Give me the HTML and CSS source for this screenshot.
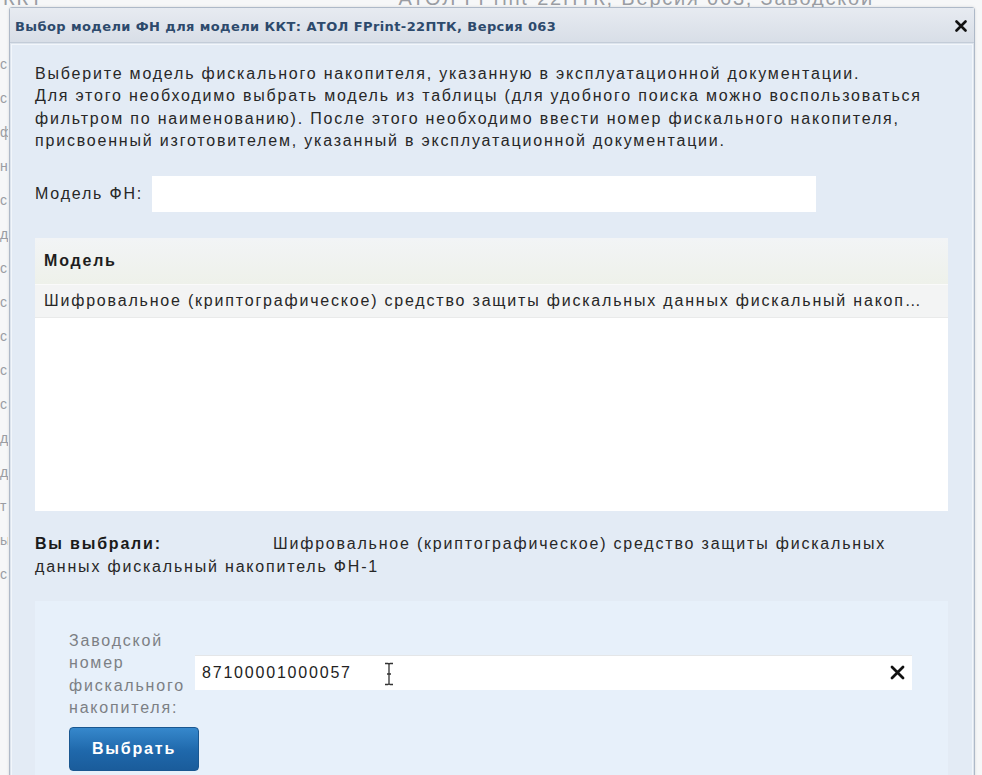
FILE: index.html
```html
<!DOCTYPE html>
<html lang="ru">
<head>
<meta charset="utf-8">
<title>Выбор модели ФН</title>
<link rel="stylesheet" href="styles.css">
</head>
<body>
<div class="page">
  <div class="page-top">
    <span class="page-kkt">ККТ</span>
    <span class="page-head">АТОЛ FPrint-22ПТК, Версия 063, Заводской</span>
  </div>
  <div class="page-side">
    <div>с</div><div>с</div><div>ф</div><div>н</div><div>с</div><div>д</div><div>с</div><div>с</div><div>с</div><div>с</div><div>с</div><div>д</div><div>д</div><div>т</div><div>ы</div><div>с</div>
  </div>
</div>

<div class="dialog">
  <div class="dialog-title">
    <span class="dialog-title-text">Выбор модели ФН для модели ККТ: АТОЛ FPrint-22ПТК, Версия 063</span>
    <svg class="dialog-close" width="12" height="12" viewBox="0 0 12 12"><path d="M1.5 1.5 L10.5 10.5 M10.5 1.5 L1.5 10.5" stroke="#111" stroke-width="2.6" stroke-linecap="round"/></svg>
  </div>
  <div class="dialog-body">
    <p class="intro">Выберите модель фискального накопителя, указанную в эксплуатационной документации.<br>Для этого необходимо выбрать модель из таблицы (для удобного поиска можно воспользоваться<br>фильтром по наименованию). После этого необходимо ввести номер фискального накопителя,<br>присвоенный изготовителем, указанный в эксплуатационной документации.</p>

    <div class="filter-row">
      <label class="filter-label">Модель ФН:</label>
      <div class="filter-input"></div>
    </div>

    <div class="grid">
      <div class="grid-head">Модель</div>
      <div class="grid-row">Шифровальное (криптографическое) средство защиты фискальных данных фискальный накопитель ФН-1</div>
    </div>

    <div class="chosen">
      <div class="chosen-first"><b class="chosen-label">Вы выбрали:</b><span class="chosen-value">Шифровальное (криптографическое) средство защиты фискальных</span></div>
      <div class="chosen-rest">данных фискальный накопитель ФН-1</div>
    </div>

    <div class="serial-panel">
      <div class="serial-row">
        <label class="serial-label">Заводской номер фискального накопителя:</label>
        <div class="serial-input">
          <span class="serial-value">87100001000057</span>
          <svg class="ibeam" width="10" height="24" viewBox="0 0 10 24"><path d="M1 1.5 H4 Q5 1.5 5 3 V21 Q5 22.5 4 22.5 H1 M9 1.5 H6 Q5 1.5 5 3 M5 21 Q5 22.5 6 22.5 H9 M3 12 H7" stroke="#333" stroke-width="1.3" fill="none"/></svg>
          <svg class="serial-clear" width="15" height="15" viewBox="0 0 15 15"><path d="M2 2 L13 13 M13 2 L2 13" stroke="#111" stroke-width="2.8" stroke-linecap="round"/></svg>
        </div>
      </div>
      <button class="btn-primary">Выбрать</button>
    </div>
  </div>
</div>
</body>
</html>
```

FILE: styles.css
```css
html, body {
  margin: 0;
  padding: 0;
  height: 100%;
  overflow: hidden;
}
body {
  background: #f6f7f8;
  font-family: "Liberation Sans", Arial, sans-serif;
  color: #2b2b2b;
  position: relative;
}

/* page behind the modal */
.page {
  color: #9a9da3;
  font-size: 20px;
  letter-spacing: 1.8px;
}
.page-top {
  display: flex;
  justify-content: space-between;
  margin-top: -13px;
  height: 20px;
  padding-right: 108px;
}
.page-kkt {
  padding-left: 3px;
}
.page-side {
  width: 8px;
  overflow: hidden;
  font-size: 14px;
  line-height: 34px;
  margin-top: 40px;
}

/* modal */
.dialog {
  position: absolute;
  left: 9px;
  top: 7px;
  width: 964px;
  bottom: -40px;
  border: 1px solid #aeb9c8;
  border-radius: 3px 3px 0 0;
  background: #dde4ed;
  display: flex;
  flex-direction: column;
  box-shadow: 0 0 3px rgba(0,0,0,0.12);
}
.dialog-title {
  height: 34px;
  flex: 0 0 auto;
  display: flex;
  align-items: center;
  justify-content: space-between;
  padding: 0 7px 0 5px;
  background: linear-gradient(#e7ebf1, #d8dee7);
  border-bottom: 1px solid #c3ccd8;
}
.dialog-title-text {
  font-family: "DejaVu Sans", Verdana, sans-serif;
  font-weight: bold;
  font-size: 13px;
  letter-spacing: 0.4px;
  color: #2d4a6c;
  padding-top: 2px;
}
.dialog-close {
  display: block;
  margin-top: 2px;
}

.dialog-body {
  flex: 1 1 auto;
  margin: 1px 1px 0 1px;
  border: 1px solid #f2f6fb;
  background: #e3ebf5;
  padding: 18px 22px 0 23px;
  letter-spacing: 1.8px;
  color: #272727;
}

.intro {
  margin: 0;
  font-size: 16px;
  line-height: 22.4px;
}

.filter-row {
  display: flex;
  align-items: center;
  margin-top: 23px;
}
.filter-label {
  font-size: 16px;
  width: 117px;
}
.filter-input {
  width: 664px;
  height: 36px;
  background: #fff;
}

.grid {
  margin-top: 26px;
  width: 913px;
  height: 273px;
  background: #fff;
}
.grid-head {
  height: 46px;
  padding-left: 9px;
  font-size: 16px;
  font-weight: bold;
  line-height: 46px;
  color: #1e1e1e;
  background: linear-gradient(#f2f4f6, #eef1ea);
}
.grid-row {
  height: 32px;
  line-height: 32px;
  padding: 0 22px 0 9px;
  font-size: 16px;
  background: #f3f4f4;
  border-top: 1px solid #fafafa;
  border-bottom: 1px solid #e9eaea;
  white-space: nowrap;
  overflow: hidden;
  text-overflow: ellipsis;
}

.chosen {
  margin-top: 21px;
  font-size: 16px;
  line-height: 23.5px;
  white-space: nowrap;
}
.chosen-label {
  display: inline-block;
  width: 238px;
  color: #1a1a1a;
}

.serial-panel {
  margin-top: 22px;
  width: 913px;
  background: #e7f0fa;
  padding: 29px 0 10px 34px;
  box-sizing: border-box;
  height: 200px;
}
.serial-row {
  display: flex;
  align-items: center;
  gap: 4px;
}
.serial-label {
  width: 122px;
  font-size: 16px;
  line-height: 22.5px;
  color: #7c7f84;
}
.serial-input {
  width: 717px;
  height: 35px;
  margin-bottom: 5px;
  background: #fff;
  border-top: 1px solid #e4e6e8;
  box-sizing: border-box;
  display: flex;
  align-items: center;
  padding: 0 7px;
}
.serial-value {
  font-size: 16px;
  color: #222;
}
.ibeam {
  margin-left: 32px;
  margin-top: 3px;
}
.serial-clear {
  margin-left: auto;
}

.btn-primary {
  margin-top: 7px;
  width: 130px;
  height: 44px;
  border: 1px solid #1a5790;
  border-radius: 4px;
  background: linear-gradient(#3688cc, #1f68ab 55%, #1a5c9b);
  color: #fff;
  font-family: "Liberation Sans", Arial, sans-serif;
  font-weight: bold;
  font-size: 16px;
  letter-spacing: 1.8px;
  padding: 0;
}
```
